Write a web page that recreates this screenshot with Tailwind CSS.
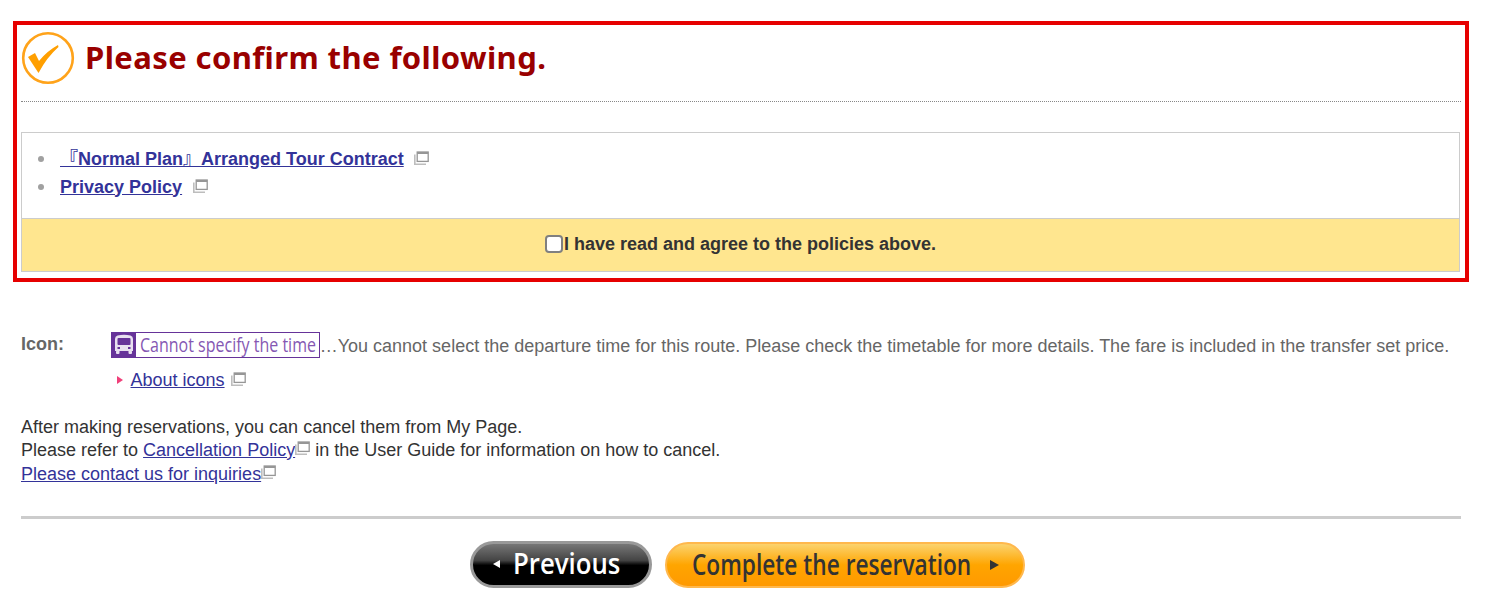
<!DOCTYPE html>
<html lang="en">
<head>
  <meta charset="UTF-8" />
  <title>Please confirm the following</title>
  <script src="https://cdn.jsdelivr.net/npm/@tailwindcss/browser@4"></script>
</head>
<body class="bg-white font-['Liberation_Sans','Noto_Sans_CJK_JP',Arial,sans-serif] text-[18px] text-[#333] overflow-hidden">
  <svg class="hidden">
    <symbol id="win" viewBox="0 0 15 14">
      <path d="M0.8 3.5V13.2H12" fill="none" stroke="#bdbdbd" stroke-width="1.6"/>
      <rect x="3.2" y="1" width="11" height="9.4" fill="#fff" stroke="#969696" stroke-width="1.3"/>
      <rect x="3.2" y="1" width="11" height="2" fill="#969696"/>
    </symbol>
  </svg>

  <div class="w-[1489px] pl-[13px] pt-[21px]">
    <!-- confirm box -->
    <section class="w-[1456px] h-[261px] border-4 border-[#e60000] px-[4px]">
      <div class="h-[77px] border-b border-dotted border-[#888] flex items-start pt-[5px] gap-[10px]">
        <svg class="w-[54px] h-[54px] mt-[1px]" viewBox="0 0 54 54">
          <circle cx="27" cy="27" r="24.8" fill="#fff" stroke="#ffa31a" stroke-width="2.6"/>
          <path d="M7 26L14 22L18 30Q26 20 37 14L37.500 16Q26 26 17.500 42Z" fill="#ff9f00"/>
        </svg>
        <h1 class="font-['Noto_Sans',sans-serif] font-bold text-[31px] leading-[54px] tracking-[0.4px] text-[#990000]">Please confirm the following.</h1>
      </div>

      <div class="mt-[30px] w-[1439px] h-[140px] border border-[#ccc]">
        <ul class="h-[85px] pt-[12px] pl-[16px]">
          <li class="h-[28px] flex items-center">
            <span class="w-[6px] h-[6px] rounded-full bg-[#a0a0a0] mr-[16px]"></span>
            <a href="#" class="font-bold underline text-[#333399]">『Normal Plan』Arranged Tour Contract</a>
            <svg class="w-[15px] h-[14px] ml-[10px] -mt-[3px]"><use href="#win"/></svg>
          </li>
          <li class="h-[28px] flex items-center">
            <span class="w-[6px] h-[6px] rounded-full bg-[#a0a0a0] mr-[16px]"></span>
            <a href="#" class="font-bold underline text-[#333399]">Privacy Policy</a>
            <svg class="w-[15px] h-[14px] ml-[11px] -mt-[3px]"><use href="#win"/></svg>
          </li>
        </ul>
        <label class="h-[53px] pb-[2px] bg-[#ffe68f] border-t border-[#ccc] flex items-center justify-center font-bold text-[#333]">
          <span class="w-[18px] h-[18px] mr-[1px] bg-white border-2 border-[#808080] rounded-[4px]"></span>I have read and agree to the policies above.
        </label>
      </div>
    </section>

    <!-- icon legend -->
    <div class="ml-[8px] mt-[50px] flex items-start">
      <span class="w-[90px] font-bold text-[#666] leading-[24px]">Icon:</span>
      <div>
        <div class="flex items-center h-[26px] text-[#666] whitespace-nowrap">
          <span class="w-[209px] h-[26px] bg-[#663399] flex items-center">
            <svg class="w-[25px] h-[26px] shrink-0" viewBox="0 0 25 26">
              <path d="M6.500 3.500Q13 1.800 19.500 3.500Q22 4.200 22 7V19H4V7Q4 4.200 6.500 3.500Z" fill="#e8e0f0"/>
              <rect x="6.500" y="6" width="13" height="7" rx="1" fill="#663399"/>
              <rect x="5" y="18.500" width="3.500" height="3.500" rx="1" fill="#e8e0f0"/>
              <rect x="17.500" y="18.500" width="3.500" height="3.500" rx="1" fill="#e8e0f0"/>
              <rect x="6.500" y="15" width="2.500" height="2" fill="#663399"/>
              <rect x="17" y="15" width="2.500" height="2" fill="#663399"/>
            </svg>
            <span class="w-[183px] h-[24px] bg-white pl-[4px]">
              <span class="block w-[178px] origin-left scale-x-[0.8] font-['Open_Sans',sans-serif] text-[20px] leading-[23px] text-[#8558b3] whitespace-nowrap">Cannot specify the time</span>
            </span>
          </span>
          <span class="mt-[2px] -ml-[0.3px]">…You cannot select the departure time for this route. Please check the timetable for more details. The fare is included in the transfer set price.</span>
        </div>
        <p class="mt-[9px] h-[26px] flex items-center pl-[6px]">
          <span class="w-0 h-0 border-y-[4px] border-y-transparent border-l-[6px] border-l-[#f0407a] mr-[7.5px]"></span>
          <a href="#" class="underline text-[#333399]">About icons</a>
          <svg class="w-[15px] h-[14px] ml-[6px] -mt-[2px]"><use href="#win"/></svg>
        </p>
      </div>
    </div>

    <!-- notes -->
    <div class="ml-[8px] mt-[23px]">
      <p class="leading-[23px]">After making reservations, you can cancel them from My Page.</p>
      <p class="-mt-[1px] leading-[24px] flex items-center">Please refer to&nbsp;<a href="#" class="underline text-[#333399]">Cancellation Policy</a><svg class="w-[15px] h-[14px] -mt-[4px] mr-[5px]"><use href="#win"/></svg>in the User Guide for information on how to cancel.</p>
      <p class="leading-[24px] flex items-center"><a href="#" class="underline text-[#333399]">Please contact us for inquiries</a><svg class="w-[15px] h-[14px] -mt-[4px]"><use href="#win"/></svg></p>
    </div>

    <hr class="ml-[8px] mt-[29.5px] w-[1440px] h-[3px] bg-[#ccc] border-0" />

    <!-- buttons -->
    <div class="mt-[22px] flex ml-[457px] gap-[13px] items-start">
      <a href="#" class="w-[182px] h-[47px] rounded-[24px] border-[3px] border-[#999] bg-[linear-gradient(#777_0%,#444_40%,#000_52%,#000_100%)] flex items-center pl-[20px] text-white font-['Open_Sans',sans-serif] font-semibold text-[28px] leading-none">
        <span class="w-0 h-0 border-y-[4px] border-y-transparent border-r-[7px] border-r-white mr-[13px]"></span>
        <span class="inline-block w-[108px] origin-left scale-x-[0.92] -mt-[3px] whitespace-nowrap">Previous</span>
      </a>
      <a href="#" class="mt-[1px] w-[360px] h-[46px] rounded-[23px] border-2 border-[#ffb84d] bg-[linear-gradient(#fbd36e_0%,#ffa500_50%,#ff9900_100%)] flex items-center pl-[25px] text-[#333] font-['Open_Sans',sans-serif] font-semibold text-[28px] leading-none">
        <span class="inline-block w-[278px] origin-left scale-x-[0.81] -mt-[1px] whitespace-nowrap">Complete the reservation</span>
        <span class="w-0 h-0 border-y-[5px] border-y-transparent border-l-[9px] border-l-[#333] ml-[20px]"></span>
      </a>
    </div>
  </div>
</body>
</html>
